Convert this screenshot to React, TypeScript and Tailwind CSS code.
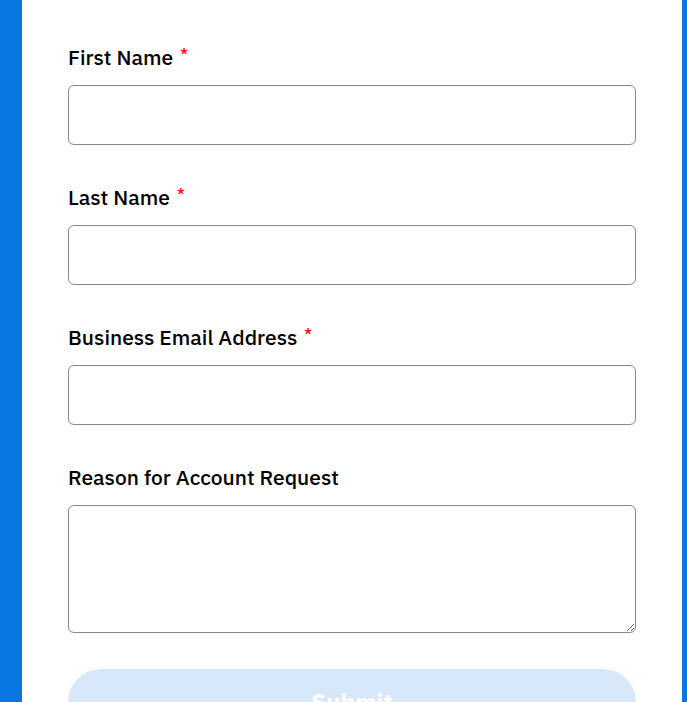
const FIELDS = [
  { label: 'First Name', required: true },
  { label: 'Last Name', required: true },
  { label: 'Business Email Address', required: true },
];

const FONT = "font-['IBM_Plex_Sans','Noto_Sans',sans-serif]";

export default function App() {
  return (
    <div className={`min-h-screen bg-[#0a76e2] pl-[22px] pr-[5px] ${FONT}`}>
      <div className="min-h-screen bg-white px-[46px] pt-[43px] pb-10">
        <form className="flex flex-col gap-[38px]">
          {FIELDS.map((f) => (
            <div key={f.label} className="flex flex-col gap-[14px]">
              <label className="h-[28px] text-[21px] leading-[28px] font-medium text-black">
                {f.label}
                {f.required && (
                  <span className="relative -top-[6px] ml-[7px] text-[15px] leading-none text-[#f00]">*</span>
                )}
              </label>
              <input
                type="text"
                className="h-[60px] w-full rounded-md border border-[#7f8895] bg-white px-3 outline-none"
              />
            </div>
          ))}
          <div className="flex flex-col gap-[14px]">
            <label className="h-[28px] text-[21px] leading-[28px] font-medium text-black">
              Reason for Account Request
            </label>
            <textarea className="h-[128px] w-full rounded-md border border-[#7f8895] bg-white px-3 py-2 outline-none" />
          </div>
          <button
            type="button"
            className="-mt-[2px] h-[66px] w-full rounded-full bg-[#d8e8fb] text-[24px] font-bold text-white"
          >
            Submit
          </button>
        </form>
      </div>
    </div>
  );
}
